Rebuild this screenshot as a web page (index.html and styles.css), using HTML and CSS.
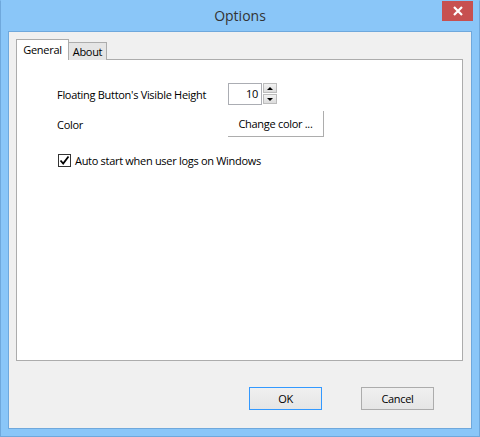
FILE: index.html
```html
<!DOCTYPE html>
<html lang="en">
<head>
  <meta charset="UTF-8" />
  <title>Options</title>
  <link rel="stylesheet" href="styles.css">
</head>
<body>

<div class="window">
  <!-- Title bar -->
  <div class="titlebar">
    <div class="title">Options</div>
    <div class="close-btn">
      <svg width="12" height="10" viewBox="0 0 12 10">
        <path d="M2 1 L10 9 M10 1 L2 9" stroke="#fff" stroke-width="2.2" />
      </svg>
    </div>
  </div>

  <div class="client">
    <div class="tabs">
      <div class="tab active">General</div>
      <div class="tab">About</div>
    </div>

    <div class="tab-panel">
      <div class="form-grid">
        <div class="label">Floating Button's Visible Height</div>
        <div class="spin">
          <div class="spin-input">10</div>
          <div class="spin-buttons">
            <div class="spin-btn"><span class="arrow-up"></span></div>
            <div class="spin-btn"><span class="arrow-down"></span></div>
          </div>
        </div>

        <div class="label">Color</div>
        <div><button class="color-btn">Change color ...</button></div>
      </div>

      <label class="check-row">
        <span class="checkbox">
          <svg width="11" height="11" viewBox="0 0 11 11">
            <path d="M1.5 5.5 L4.2 8.5 L9.5 1.5" fill="none" stroke="#000" stroke-width="1.8" />
          </svg>
        </span>
        Auto start when user logs on Windows
      </label>
    </div>

    <div class="footer">
      <button class="btn default">OK</button>
      <button class="btn">Cancel</button>
    </div>
  </div>
</div>

</body>
</html>
```

FILE: styles.css
```css
* {
  margin: 0;
  padding: 0;
  box-sizing: border-box;
}

body {
  font-family: "Open Sans", "Noto Sans", sans-serif;
  font-size: 11px;
  letter-spacing: -0.3px;
  color: #000;
  background: #fff;
}

.window {
  width: 480px;
  height: 437px;
  background: #8ac6f8;
  border: 1px solid #6fa8dc;
  border-top-color: #8ac6f8;
  display: flex;
  flex-direction: column;
}

/* Title bar */
.titlebar {
  height: 30px;
  display: flex;
  align-items: flex-start;
  justify-content: center;
  position: relative;
}

.title {
  font-size: 14px;
  letter-spacing: 0;
  color: #333;
  margin-top: 5px;
}

.close-btn {
  position: absolute;
  right: 6px;
  top: 0;
  width: 31px;
  height: 20px;
  background: #c75050;
  display: flex;
  align-items: center;
  justify-content: center;
}

.client {
  flex: 1;
  margin: 0 7px 7px 7px;
  background: #f0f0f0;
  border: 1px solid #6fa8dc;
  padding: 7px 8px 0 7px;
  display: flex;
  flex-direction: column;
}

/* Tabs */
.tabs {
  display: flex;
  align-items: flex-end;
  height: 21px;
  margin-bottom: -1px;
  position: relative;
  z-index: 1;
}

.tab {
  width: 39px;
  border: 1px solid #acacac;
  border-bottom: none;
  background: #e5e5e5;
  text-align: center;
  padding-top: 1px;
  height: 18px;
  line-height: 16px;
}

.tab.active {
  width: 53px;
  background: #fff;
  height: 21px;
  line-height: 17px;
  margin-right: -1px;
  z-index: 2;
}

.tab-panel {
  background: #fff;
  border: 1px solid #acacac;
  height: 302px;
  padding: 23px 0 0 40px;
}

.form-grid {
  display: grid;
  grid-template-columns: 171px auto;
  row-gap: 6px;
  align-items: center;
}

.spin {
  display: flex;
  gap: 1px;
}

.spin-input {
  width: 34px;
  height: 22px;
  border: 1px solid #abadb3;
  text-align: right;
  padding-right: 3px;
  line-height: 20px;
}

.spin-buttons {
  display: flex;
  flex-direction: column;
  gap: 1px;
}

.spin-btn {
  width: 14px;
  height: 10px;
  background: linear-gradient(#f2f2f2, #dcdcdc);
  border: 1px solid #bcbcbc;
  display: flex;
  align-items: center;
  justify-content: center;
}

.arrow-up {
  border-left: 3px solid transparent;
  border-right: 3px solid transparent;
  border-bottom: 3px solid #000;
}

.arrow-down {
  border-left: 3px solid transparent;
  border-right: 3px solid transparent;
  border-top: 3px solid #000;
}

.color-btn {
  font: inherit;
  letter-spacing: inherit;
  width: 96px;
  height: 26px;
  background: #fff;
  border: none;
  border-right: 1px solid #adadad;
  border-bottom: 1px solid #adadad;
}

.check-row {
  display: flex;
  align-items: center;
  gap: 4px;
  margin-top: 16px;
  margin-left: 1px;
}

.checkbox {
  width: 13px;
  height: 13px;
  border: 1px solid #333;
  background: #fff;
  display: flex;
  align-items: center;
  justify-content: center;
}

/* Footer buttons */
.footer {
  display: flex;
  justify-content: flex-end;
  gap: 39px;
  padding: 26px 29px 0 0;
}

.btn {
  font: inherit;
  letter-spacing: inherit;
  width: 73px;
  height: 23px;
  background: linear-gradient(#f0f0f0, #e5e5e5);
  border: 1px solid #acacac;
  color: #000;
}

.btn.default {
  border-color: #3399ff;
}
```
